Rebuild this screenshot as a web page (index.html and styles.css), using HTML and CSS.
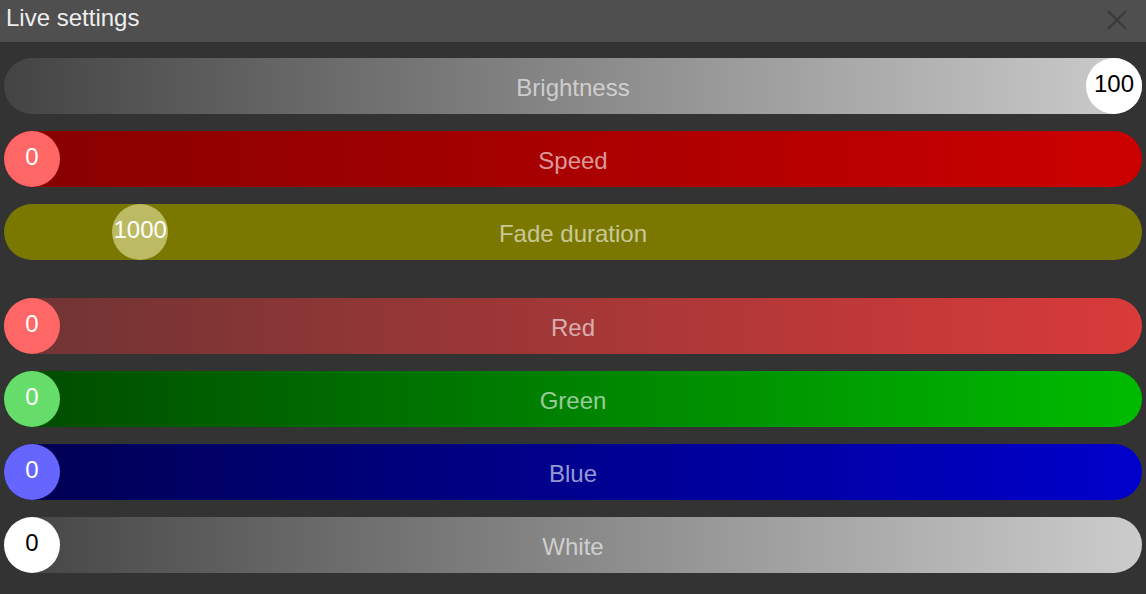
FILE: index.html
```html
<!DOCTYPE html>
<html lang="en">
<head>
  <meta charset="UTF-8">
  <title>Live settings</title>
  <link rel="stylesheet" href="styles.css">
</head>
<body>
  <div id="topPanel">
    <div class="title">Live settings</div>
    <button class="close-button" title="Close">
      <svg width="20" height="20" viewBox="0 0 20 20">
        <path d="M1 1 L19 19 M19 1 L1 19" stroke="#3a3a3a" stroke-width="2.2" fill="none"/>
      </svg>
    </button>
  </div>

  <div id="content">
    <div class="group">
      <div class="slider brightness">
        <span class="label">Brightness</span>
        <span class="thumb thumb-white" style="left: calc((100% - 56px) * 1)">100</span>
      </div>
      <div class="slider speed">
        <span class="label">Speed</span>
        <span class="thumb thumb-red" style="left: calc((100% - 56px) * 0)">0</span>
      </div>
      <div class="slider fade">
        <span class="label">Fade duration</span>
        <span class="thumb thumb-fade" style="left: calc((100% - 56px) * 0.1)">1000</span>
      </div>
    </div>

    <div class="group">
      <div class="slider red">
        <span class="label">Red</span>
        <span class="thumb thumb-red" style="left: calc((100% - 56px) * 0)">0</span>
      </div>
      <div class="slider green">
        <span class="label">Green</span>
        <span class="thumb thumb-green" style="left: calc((100% - 56px) * 0)">0</span>
      </div>
      <div class="slider blue">
        <span class="label">Blue</span>
        <span class="thumb thumb-blue" style="left: calc((100% - 56px) * 0)">0</span>
      </div>
      <div class="slider white">
        <span class="label">White</span>
        <span class="thumb thumb-white" style="left: calc((100% - 56px) * 0)">0</span>
      </div>
    </div>
  </div>
</body>
</html>
```

FILE: styles.css
```css
body {
  margin: 0;
  background-color: #333333;
  font-family: "Liberation Sans", Arial, sans-serif;
  font-size: 24px;
}
#topPanel {
  height: 42px;
  background-color: #4f4f4f;
  display: flex;
  justify-content: space-between;
  align-items: flex-start;
  padding: 0 6px;
  color: #eeeeee;
}
#topPanel .title {
  line-height: 36px;
}
.close-button {
  background: none;
  border: none;
  padding: 0;
  margin: 10px 13px 0 0;
  width: 20px;
  height: 20px;
  cursor: pointer;
}
.close-button svg {
  display: block;
}
#content {
  padding: 16px 4px 0 4px;
  display: flex;
  flex-direction: column;
  gap: 38px;
}
.group {
  display: flex;
  flex-direction: column;
  gap: 17px;
}
.slider {
  position: relative;
  height: 56px;
  border-radius: 28px;
  display: flex;
  justify-content: center;
  align-items: center;
}
.slider .label {
  color: rgba(255, 255, 255, 0.6);
  padding-top: 3px;
}
.thumb {
  position: absolute;
  top: 0;
  width: 56px;
  height: 56px;
  border-radius: 50%;
  display: flex;
  justify-content: center;
  align-items: center;
  box-sizing: border-box;
  padding-bottom: 4px;
  color: white;
  white-space: nowrap;
}

/* track colours */
.brightness, .white {
  background: linear-gradient(to right, #444444, #cccccc);
}
.speed {
  background: linear-gradient(to right, #860000, #cc0000);
}
.fade {
  background-color: #7a7800;
}
.red {
  background: linear-gradient(to right, #6e3434, #da3a3a);
}
.green {
  background: linear-gradient(to right, #004a00, #00bb00);
}
.blue {
  background: linear-gradient(to right, #000050, #0000cc);
}

/* thumb colours */
.thumb-white {
  background-color: white;
  color: black;
}
.thumb-red {
  background-color: #ff6666;
}
.thumb-green {
  background-color: #66dd6a;
}
.thumb-blue {
  background-color: #6666ff;
}
.thumb-fade {
  background-color: #bcbb63;
}
```
